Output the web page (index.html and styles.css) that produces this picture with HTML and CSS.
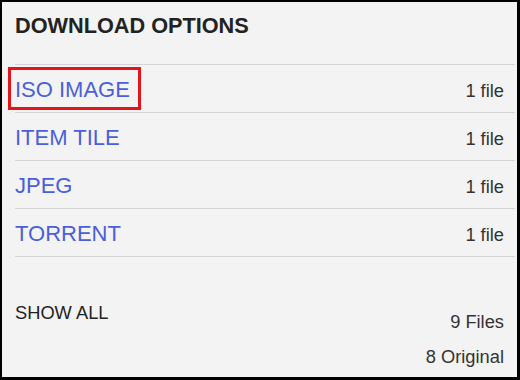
FILE: index.html
```html
<!DOCTYPE html>
<html lang="en">
<head>
<meta charset="utf-8">
<title>Download Options</title>
<link rel="stylesheet" href="styles.css">
</head>
<body>
<section class="panel">
  <h5 class="panel-title">DOWNLOAD OPTIONS</h5>
  <ul class="format-list">
    <li class="format-row">
      <a class="format-link hl" href="#">ISO IMAGE</a>
      <span class="count">1 file</span>
    </li>
    <li class="format-row">
      <a class="format-link" href="#">ITEM TILE</a>
      <span class="count">1 file</span>
    </li>
    <li class="format-row">
      <a class="format-link" href="#">JPEG</a>
      <span class="count">1 file</span>
    </li>
    <li class="format-row">
      <a class="format-link" href="#">TORRENT</a>
      <span class="count">1 file</span>
    </li>
  </ul>
  <div class="show-all">
    <a class="show-all-link" href="#">SHOW ALL</a>
    <div class="totals">
      <span>9 Files</span>
      <span>8 Original</span>
    </div>
  </div>
</section>
</body>
</html>
```

FILE: styles.css
```css
html, body {
  margin: 0;
  padding: 0;
  background: #000;
}

.panel {
  box-sizing: border-box;
  width: 520px;
  height: 380px;
  border-style: solid;
  border-color: #000;
  border-width: 2px 3px 3px 2px;
  background: #f3f3f3;
  padding: 0 2px 0 13px;
  font-family: "Liberation Sans", Arial, sans-serif;
  color: #333;
  overflow: hidden;
}

.panel-title {
  margin: 0;
  padding: 9px 0 23px 0;
  font-size: 21.7px;
  line-height: 30px;
  font-weight: bold;
  color: #222;
  border-bottom: 1px solid #d4d4d4;
}

.format-list {
  list-style: none;
  margin: 0;
  padding: 0;
}

.format-row {
  display: flex;
  justify-content: space-between;
  align-items: baseline;
  height: 48px;
  box-sizing: border-box;
  padding: 9px 11px 0 0;
  border-bottom: 1px solid #d4d4d4;
}

.format-link {
  display: inline-block;
  font-size: 22px;
  line-height: 31px;
  color: #4a5fd9;
  text-decoration: none;
}

.hl {
  position: relative;
}

.hl::after {
  content: "";
  position: absolute;
  left: -7px;
  right: -11px;
  top: -7px;
  bottom: -5px;
  border: 3px solid #e3141b;
}

.count {
  font-size: 18.3px;
  line-height: 31px;
  color: #333;
}

.show-all {
  display: flex;
  justify-content: space-between;
  align-items: flex-start;
  padding: 39px 11px 0 0;
}

.show-all-link {
  font-size: 18.3px;
  line-height: 34px;
  color: #222;
  text-decoration: none;
}

.totals {
  display: flex;
  flex-direction: column;
  align-items: flex-end;
  padding-top: 8px;
  font-size: 18.3px;
  line-height: 35px;
  color: #333;
}
```
